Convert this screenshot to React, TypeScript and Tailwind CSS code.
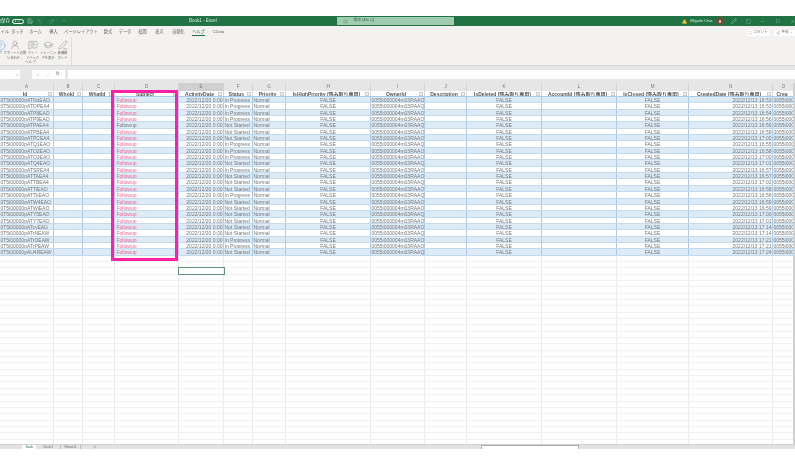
import { ChevronDown, Check, X, Plus, Search, Save, Undo2, Redo2, Pencil, Minus, Square, HelpCircle, UserRound, MessageSquareText, GraduationCap, PenLine, TriangleAlert, MessageSquare, Share2 } from "lucide-react";

const gridCols = "grid grid-cols-[54px_29px_32px_64px_45px_29px_33px_85px_54px_42px_75px_75px_72px_84px_1fr]";
const font = "font-['Liberation_Sans','Noto_Sans_CJK_JP',sans-serif]";

const ids = ["ATNgEAO", "ATOPEA4", "ATP8EAO", "ATP9EAO", "ATPAEA4", "ATPBEA4", "ATPCEA4", "ATQ1EAO", "ATQ2EAO", "ATQ3EAO", "ATQ4EAO", "ATSREA4", "ATTAEA4", "ATTBEA4", "ATTjEAO", "ATTkEAO", "ATW4EAO", "ATWiEAO", "ATY5EAO", "ATY7EAO", "ATcyEAG", "ATrNEAW", "ATrOEAW", "ATrPEAW", "AU4REAW"];
const started = [0, 0, 0, 0, 1, 1, 1, 0, 0, 0, 1, 0, 1, 1, 1, 0, 1, 1, 1, 1, 1, 1, 0, 0, 1];
const times = ["16:53", "16:53", "16:54", "16:56", "16:56", "16:59", "17:00", "16:55", "16:58", "17:00", "17:01", "16:57", "16:57", "17:02", "16:58", "16:58", "16:59", "16:59", "17:00", "17:01", "17:14", "17:14", "17:21", "17:21", "17:24"];

const letters = ["A", "B", "C", "D", "E", "F", "G", "H", "I", "J", "K", "L", "M", "N", "O"];
const headers = ["Id", "WhoId", "WhatId", "Subject", "ActivityDate", "Status", "Priority", "IsHighPriority (読み取り専用)", "OwnerId", "Description", "IsDeleted (読み取り専用)", "AccountId (読み取り専用)", "IsClosed (読み取り専用)", "CreatedDate (読み取り専用)", "Crea"];
const tabs = [
  { label: "ファイル", w: "w-[9px]", end: true },
  { label: "タッチ", w: "w-[17px]" },
  { label: "ホーム", w: "w-[19px]" },
  { label: "挿入", w: "w-[17px]" },
  { label: "ページレイアウト", w: "w-[38px]" },
  { label: "数式", w: "w-[16px]" },
  { label: "データ", w: "w-[18px]" },
  { label: "校閲", w: "w-[17px]" },
  { label: "表示", w: "w-[17px]" },
  { label: "自動化", w: "w-[21px]" },
  { label: "ヘルプ", w: "w-[19px]", active: true },
  { label: "CData", w: "w-[21px]" },
];

const Cell = ({ children, align = "text-left", color = "text-[#777]" }: { children?: React.ReactNode; align?: string; color?: string }) => (
  <div className={`overflow-hidden whitespace-nowrap border-r border-[#a9cbe8] px-[0.5px] text-[5px] leading-[6px] ${align} ${color}`}>{children}</div>
);

const DataRow = ({ index }: { index: number }) => (
  <div className={`${gridCols} h-[6.35px] border-b border-[#c3daee] ${index % 2 === 0 ? "bg-[#ddebf7]" : "bg-white"}`}>
    <Cell>{`0T5i00000p${ids[index]}`}</Cell>
    <Cell />
    <Cell />
    <Cell color={index === 4 ? "text-[#777]" : "text-[#f0648c]"}>
      <span className="pl-[1px]">Followup</span>
    </Cell>
    <Cell align="text-right">2022/12/20 0:00</Cell>
    <Cell>{started[index] ? "Not Started" : "In Progress"}</Cell>
    <Cell>Normal</Cell>
    <Cell align="text-center">FALSE</Cell>
    <Cell>0055i000004m03RAAQ</Cell>
    <Cell />
    <Cell align="text-center">FALSE</Cell>
    <Cell />
    <Cell align="text-center">FALSE</Cell>
    <Cell align="text-right">{`2022/12/13 ${times[index]}`}</Cell>
    <Cell>0055i000004m03RAAQ</Cell>
  </div>
);

const EmptyRow = ({ selected }: { selected: boolean }) => (
  <div className={`${gridCols} h-[6.35px] border-b border-[#f1f1f1]`}>
    {letters.map((letter) => (
      <div key={letter} className={`border-r border-[#ebebeb] ${selected && letter === "E" ? "outline-[1.5px] outline-[#5f9478]" : ""}`} />
    ))}
  </div>
);

const RibbonButton = ({ icon, lines, w }: { icon: React.ReactNode; lines: string[]; w: string }) => (
  <div className={`${w} flex flex-col items-center`}>
    <div className="flex h-[12px] items-center text-[#666]">{icon}</div>
    {lines.map((line) => (
      <div key={line} className="whitespace-nowrap text-[3.2px] leading-[4.5px] text-[#666]">{line}</div>
    ))}
  </div>
);

export default function App() {
  return (
    <div className={`${font} relative flex h-[468px] w-[795px] flex-col overflow-hidden bg-white blur-[0.3px]`}>
      <div className="h-4 shrink-0 bg-white" />

      {/* title bar */}
      <div className="flex h-[10px] shrink-0 items-center bg-[#217346] text-[4.5px] text-[#d5e6dc]">
        <div className="flex w-[338px] items-center">
          <span className="-ml-[8px] w-[20px] whitespace-nowrap">自動保存</span>
          <span className="flex h-[5px] w-[12px] items-center rounded-full border-[0.5px] border-white pl-[1px] text-[3px]">オン</span>
          <Save size={6} strokeWidth={1.4} className="ml-[3px]" />
          <Undo2 size={6} strokeWidth={1.2} className="ml-[4px] opacity-50" />
          <Redo2 size={6} strokeWidth={1.2} className="ml-[6px] opacity-50" />
          <ChevronDown size={4} className="ml-[7px]" />
          <span className="ml-[123px] whitespace-nowrap">Book1 - Excel</span>
        </div>
        <div className="flex h-[8px] w-[117px] items-center bg-[#a0ccb0] pl-[6px] text-[#3f6f55]">
          <Search size={5} strokeWidth={1.5} />
          <span className="ml-[5px] whitespace-nowrap text-[3.8px]">検索 (Alt+Q)</span>
        </div>
        <div className="flex flex-1 items-center">
          <TriangleAlert size={5} className="ml-[227.5px] fill-[#f2c233] text-[#f2c233]" />
          <span className="ml-[3.5px] whitespace-nowrap text-[4.4px]">Miyabi Ono</span>
          <span className="ml-[3px] flex h-[8px] w-[8px] items-center justify-center rounded-full bg-[#6b5038]">
            <span className="h-[3px] w-[2px] rounded-full bg-[#e8c9a8]" />
          </span>
          <Pencil size={6} strokeWidth={1.2} className="ml-[7px]" />
          <Square size={5} strokeWidth={1.2} className="ml-[9.5px]" />
          <Minus size={5} strokeWidth={1.2} className="ml-[9px]" />
          <Square size={4} strokeWidth={1.2} className="ml-[10.5px]" />
          <X size={5} strokeWidth={1.2} className="ml-[10.5px] shrink-0" />
        </div>
      </div>

      {/* ribbon tabs */}
      <div className="flex h-[11px] shrink-0 items-center bg-[#f3f2f1] pt-[2px] text-[4.2px] text-[#666]">
        {tabs.map((tab) => (
          <div key={tab.label} className={`${tab.w} flex h-full items-center whitespace-nowrap ${tab.end ? "justify-end" : "justify-center"} ${tab.active ? "text-[#217346]" : ""}`}>
            <span className={tab.active ? "border-b border-[#217346]" : ""}>{tab.label}</span>
          </div>
        ))}
        <div className="ml-auto flex items-center gap-[5px] text-[3.8px]">
          <span className="flex h-[6px] w-[22px] items-center justify-center gap-[1px] bg-white">
            <MessageSquare size={4} strokeWidth={1} />
            コメント
          </span>
          <span className="flex h-[6px] w-[21px] items-center justify-center gap-[1px] bg-white">
            <Share2 size={4} strokeWidth={1} />
            共有
            <ChevronDown size={3} />
          </span>
        </div>
      </div>

      {/* ribbon */}
      <div className="flex h-[29px] shrink-0 border-b border-[#d6d6d6] bg-[#f3f2f1]">
        <div className="flex w-[72px] flex-col border-r border-[#dcdcdc] pt-[2px]">
          <div className="-ml-[6px] flex">
            <RibbonButton w="w-[12px]" icon={<HelpCircle size={11} strokeWidth={0.9} className="text-[#2b88d8]" />} lines={["プ"]} />
            <RibbonButton w="w-[18px]" icon={<UserRound size={10} strokeWidth={0.9} />} lines={["サポートへの問", "い合わせ..."]} />
            <RibbonButton w="w-[17px]" icon={<MessageSquareText size={10} strokeWidth={0.9} />} lines={["フィー", "ドバック"]} />
            <RibbonButton w="w-[14px]" icon={<GraduationCap size={10} strokeWidth={0.9} />} lines={["トレーニン", "グを表示"]} />
            <RibbonButton w="w-[15px]" icon={<PenLine size={10} strokeWidth={0.9} />} lines={["新機能", "ガイド"]} />
          </div>
          <div className="mt-auto pb-[1px] pl-[25px] text-[3.6px] leading-[4px] text-[#777]">ヘルプ</div>
        </div>
      </div>

      {/* formula bar */}
      <div className="flex h-[17px] shrink-0 flex-col bg-[#e6e6e6] pt-[4px]">
        <div className="flex h-[9px] items-stretch">
          <div className="flex w-[20px] items-center justify-end bg-white pr-[1px]">
            <ChevronDown size={4} className="text-[#555]" />
          </div>
          <div className="w-[12px]" />
          <div className="flex w-[33px] items-center gap-[6px] bg-white pl-[4px] text-[#aaa]">
            <X size={4} />
            <Check size={4} />
            <span className="text-[4.5px] italic text-[#666]">fx</span>
          </div>
          <div className="ml-[3px] flex-1 bg-white" />
        </div>
      </div>

      {/* column letters */}
      <div className={`${gridCols} h-[8px] shrink-0 bg-[#e6e6e6]`}>
        {letters.map((letter) => (
          <div key={letter} className={`border-r border-[#d4d4d4] text-center text-[4.5px] leading-[8px] text-[#777] ${letter === "E" ? "border-b border-b-[#217346] bg-[#d0d0d0]" : ""}`}>
            {letter}
          </div>
        ))}
      </div>

      {/* table header */}
      <div className={`${gridCols} h-[6px] shrink-0 border-b border-[#a9cbe8] bg-white`}>
        {headers.map((header, i) => (
          <div key={header} className="relative overflow-hidden whitespace-nowrap border-r border-[#d4d4d4] pr-[3px] text-center text-[5px] font-bold leading-[6px] text-[#555]">
            {header}
            {i < 14 && <span className="absolute right-[1px] top-[1px] h-[4px] w-[4px] border-[0.5px] border-[#ccc] bg-[#f3f3f3]" />}
          </div>
        ))}
      </div>

      {/* rows */}
      <div className="flex-1 overflow-hidden">
        {ids.map((id, i) => (
          <DataRow key={id} index={i} />
        ))}
        {Array.from({ length: 30 }, (_, i) => (
          <EmptyRow key={i} selected={i === 2} />
        ))}
      </div>

      {/* sheet tabs */}
      <div className="flex h-[5px] shrink-0 items-start border-t border-[#d0d0d0] bg-[#e2e2e2] text-[4px] leading-[4px] text-[#777]">
        <div className="ml-[22px] w-[14px] bg-white text-center text-[#217346]">Task</div>
        <div className="w-[25px] border-r border-[#bbb] text-center">Task1</div>
        <div className="w-[20px] border-r border-[#bbb] text-center">Sheet1</div>
        <Plus size={4} className="ml-[12px]" />
        <div className="ml-[384px] h-[4px] w-[98px] border-x border-t border-[#aaa] bg-white" />
      </div>

      <div className="h-[19px] shrink-0 bg-white" />

      {/* pink highlight drawn over the subject column */}
      <div className="absolute left-[111px] top-[90px] h-[171px] w-[67px] border-[3px] border-[#ff1fa8]" />
      {/* vertical scrollbar */}
      <div className="absolute bottom-[24px] right-0 top-[83px] w-[2px] bg-[#d0d0d0]" />
    </div>
  );
}
